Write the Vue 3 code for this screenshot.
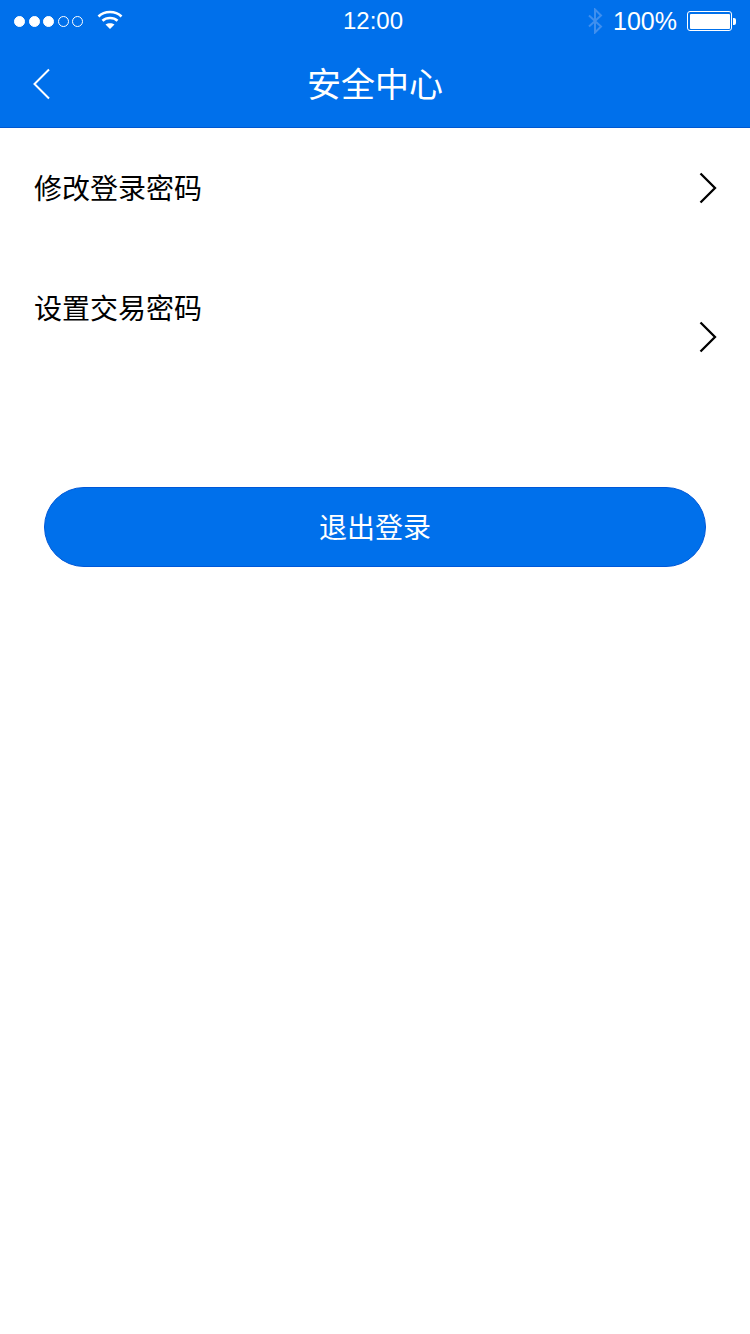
<template>
  <div class="page">
    <header class="top">
      <div class="status">
        <div class="status-left">
          <div class="signal">
            <i v-for="n in 5" :key="n" class="dot" :class="{ on: n <= 3 }"></i>
          </div>
          <svg class="wifi" width="26" height="21" viewBox="0 0 26 21">
            <path d="M1.500 7.500C7.500 1.500 18.500 1.500 24.500 7.500" fill="none" stroke="#fff" stroke-width="2.600" />
            <path d="M5.500 11.800C9.500 8 16.500 8 20.500 11.800" fill="none" stroke="#fff" stroke-width="2.600" />
            <path d="M8.500 15.500C11 13.800 15 13.800 17.500 15.500L13 20Z" fill="#fff" />
          </svg>
        </div>
        <div class="time">12:00</div>
        <div class="status-right">
          <svg class="bt" width="16" height="26" viewBox="0 0 16 26">
            <path d="M2 7.500L14 18.500L8 24.500V1.500L14 7.500L2 18.500" fill="none" stroke="#3f8fee" stroke-width="2" />
          </svg>
          <span class="pct">100%</span>
          <div class="battery">
            <div class="battery-shell"><div class="battery-fill"></div></div>
            <div class="battery-tip"></div>
          </div>
        </div>
      </div>
      <div class="navbar">
        <svg class="back" width="20" height="32" viewBox="0 0 20 32">
          <path d="M17 1.500L2.500 16L17 30.500" fill="none" stroke="#fff" stroke-width="2" />
        </svg>
        <h1 class="title">安全中心</h1>
      </div>
    </header>

    <div class="menu">
      <div class="row">
        <span class="label">修改登录密码</span>
        <svg class="chev" width="18" height="32" viewBox="0 0 18 32">
          <path d="M1.500 1.500L16 16L1.500 30.500" fill="none" stroke="#000" stroke-width="2.300" />
        </svg>
      </div>
      <div class="row">
        <span class="label">设置交易密码</span>
        <svg class="chev chev-low" width="18" height="32" viewBox="0 0 18 32">
          <path d="M1.500 1.500L16 16L1.500 30.500" fill="none" stroke="#000" stroke-width="2.300" />
        </svg>
      </div>
    </div>

    <button class="logout">退出登录</button>
  </div>
</template>

<script setup>
</script>

<style>
html, body {
  margin: 0;
  background: #fff;
}
</style>

<style scoped>
.page {
  width: 750px;
  height: 1334px;
  background: #fff;
  font-family: "Liberation Sans", "Noto Sans CJK SC", sans-serif;
  overflow: hidden;
}
.top {
  height: 127px;
  background: #0070eb;
  border-bottom: 1px solid #0058d0;
  color: #fff;
}
.status {
  height: 42px;
  display: grid;
  grid-template-columns: 1fr auto 1fr;
  align-items: center;
}
.status-left {
  display: flex;
  align-items: center;
  padding-left: 14px;
  gap: 14px;
}
.signal {
  display: flex;
  gap: 3.5px;
}
.dot {
  box-sizing: border-box;
  width: 11px;
  height: 11px;
  border-radius: 50%;
  border: 1px solid #fff;
}
.dot.on {
  background: #fff;
}
.wifi {
  margin-top: -3px;
}
.time {
  font-size: 24px;
  margin-left: -4px;
}
.status-right {
  display: flex;
  align-items: center;
  justify-content: flex-end;
  padding-right: 14px;
}
.bt {
  margin-right: 10px;
}
.pct {
  font-size: 25px;
  margin-right: 10px;
}
.battery {
  display: flex;
  align-items: center;
}
.battery-shell {
  box-sizing: border-box;
  width: 45px;
  height: 20px;
  border: 1px solid #fff;
  border-radius: 3px;
  padding: 1.5px;
}
.battery-fill {
  height: 100%;
  background: #fff;
  border-radius: 1px;
}
.battery-tip {
  width: 3px;
  height: 7px;
  background: #fff;
  margin-left: 1px;
  border-radius: 0 2px 2px 0;
}
.navbar {
  position: relative;
  height: 85px;
  display: flex;
  align-items: center;
  justify-content: center;
}
.back {
  position: absolute;
  left: 32px;
  top: 26px;
}
.title {
  margin: 1px 0 0;
  font-size: 34px;
  line-height: 46px;
  font-weight: 400;
}
.menu {
  display: flex;
  flex-direction: column;
}
.row {
  height: 120px;
  display: flex;
  align-items: center;
  justify-content: space-between;
  padding: 0 33px 0 34px;
  color: #000;
}
.label {
  font-size: 28px;
  line-height: 40px;
  margin-top: 3px;
}
.chev-low {
  transform: translateY(29px);
}
.logout {
  display: block;
  box-sizing: border-box;
  width: 662px;
  height: 80px;
  margin: 119px 0 0 44px;
  border: 1px solid #0058d8;
  border-radius: 40px;
  background: #0070eb;
  color: #fff;
  font-family: inherit;
  font-size: 28px;
  padding: 0 0 2px;
}
</style>
